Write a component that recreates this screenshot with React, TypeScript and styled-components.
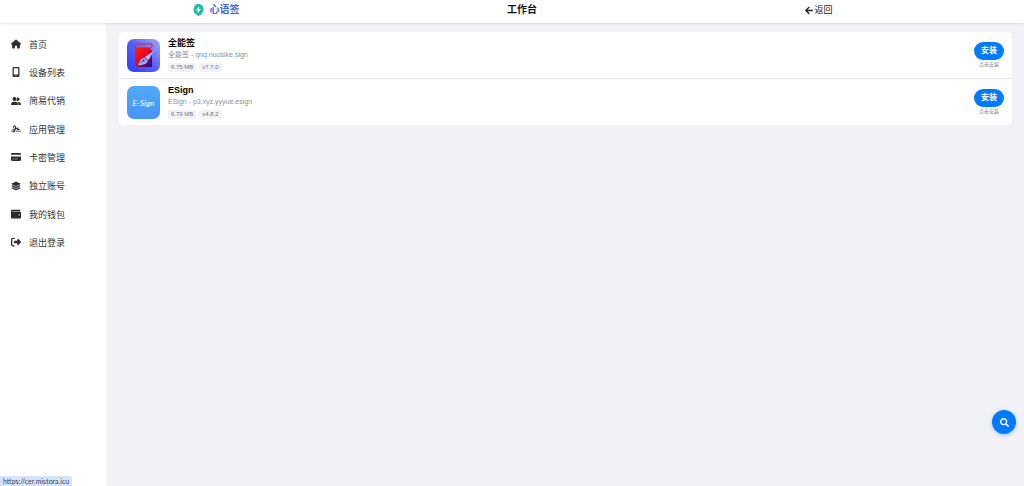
import React from 'react';
import styled, { createGlobalStyle } from 'styled-components';
import {
  FaHouse, FaMobileScreenButton, FaUserGroup, FaSignature, FaCreditCard,
  FaLayerGroup, FaWallet, FaRightFromBracket,
} from 'react-icons/fa6';
import { FaArrowLeft, FaSearch } from 'react-icons/fa';

const GlobalStyle = createGlobalStyle`
  * { box-sizing: border-box; }
  body {
    margin: 0;
    background: #f2f1f6;
    color: #333;
    font-family: "Liberation Sans", "Noto Sans CJK SC", sans-serif;
    font-size: 9px;
  }
  a { color: inherit; text-decoration: none; }
`;

const Page = styled.div`
  display: flex;
  flex-direction: column;
  min-height: 100vh;
`;

const Header = styled.header`
  display: flex;
  align-items: center;
  justify-content: space-between;
  height: 23px;
  padding: 0 18.7% 3px 18.8%;
  background: #fff;
  box-shadow: 0 1px 2px rgba(0, 0, 0, 0.1);
  z-index: 1;
`;

const Brand = styled.a`
  display: flex;
  align-items: center;
  gap: 6px;
  font-size: 10px;
  line-height: 12px;
  font-weight: 700;
  && { color: #4169e1; }
`;

const Title = styled.h1`
  margin: 0;
  font-size: 10px;
  line-height: 12px;
  color: #111;
`;

const Back = styled.a`
  display: flex;
  align-items: center;
  gap: 2px;
  font-size: 9px;
  line-height: 12px;
  && { color: #222; }
  svg { width: 8px; height: 9px; }
`;

const Body = styled.div`
  display: flex;
  flex: 1;
`;

const Sidebar = styled.nav`
  flex: none;
  width: 106px;
  padding-top: 7px;
  background: #fff;
`;

const Menu = styled.ul`
  margin: 0;
  padding: 0;
  list-style: none;
`;

const MenuItem = styled.li`
  &:nth-child(3n) a { height: 29px; }
`;

const MenuLink = styled.a`
  display: flex;
  align-items: center;
  gap: 8px;
  height: 28px;
  padding-left: 11px;
  font-size: 9px;
  svg { width: 10px; height: 10px; color: #2b2b2b; }
`;

const Main = styled.main`
  flex: 1;
  padding: 9px 12px 9px 13px;
`;

const AppList = styled.ul`
  margin: 0;
  padding: 0;
  list-style: none;
  background: #fff;
  border-radius: 5px;
`;

const AppRow = styled.li`
  display: flex;
  align-items: center;
  gap: 8px;
  padding: 5px 8px 6px;
  & + & { border-top: 1px solid #e8e8ec; }
`;

const AppIcon = styled.svg`
  flex: none;
  align-self: flex-end;
  width: 33px;
  height: 33px;
`;

const Info = styled.div`
  flex: 1;
  display: flex;
  flex-direction: column;
`;

const AppName = styled.h2`
  margin: 0;
  font-size: 9px;
  line-height: 12px;
  color: #000;
`;

const Detail = styled.p`
  margin: 0;
  font-size: 7px;
  line-height: 12px;
  color: #8e8e93;
`;

const Tags = styled.div`
  display: flex;
  gap: 3px;
  margin-top: 2px;
`;

const Tag = styled.span`
  padding: 0 3px;
  border-radius: 2px;
  background: #f2f2f7;
  font-size: 6px;
  line-height: 9px;
  color: #77777c;
`;

const Action = styled.div`
  display: flex;
  flex-direction: column;
  align-items: center;
`;

const InstallButton = styled.button`
  width: 30px;
  height: 18px;
  padding: 0;
  border: 0;
  border-radius: 9px;
  background: #007aff;
  color: #fff;
  font: inherit;
  font-size: 8px;
  font-weight: 700;
  line-height: 16px;
`;

const Hint = styled.small`
  font-size: 5px;
  line-height: 8px;
  color: #77777c;
`;

const SearchButton = styled.button`
  position: fixed;
  right: 8px;
  bottom: 52px;
  display: grid;
  place-items: center;
  width: 24px;
  height: 24px;
  padding: 0;
  border: 0;
  border-radius: 50%;
  background: #007aff;
  color: #fff;
  box-shadow: 0 1px 4px rgba(0, 122, 255, 0.35);
`;

const StatusBar = styled.div`
  position: fixed;
  left: 0;
  bottom: 0;
  padding: 1px 3px 0;
  border-top-right-radius: 3px;
  background: #d3e3fd;
  color: #474747;
  font-family: Lato, sans-serif;
  font-size: 7px;
  line-height: 9px;
`;

const BrandMark = () => (
  <svg width="11" height="12" viewBox="0 0 22 24" aria-hidden="true">
    <path d="M11 0C16 0 21 4 21 11C21 17 16 22 11 24C6 22 1 17 1 11C1 4 6 0 11 0Z" fill="#1abc9c" />
    <path d="M12 4L6 13H10L9 19L16 10H12Z" fill="#fff" />
  </svg>
);

const BookIcon = () => (
  <AppIcon viewBox="0 0 66 66" aria-hidden="true">
    <defs>
      <linearGradient id="bookBack" x1="0" y1="1" x2="1" y2="0">
        <stop offset="0" stopColor="#273dfa" />
        <stop offset=".5" stopColor="#5660f7" />
        <stop offset="1" stopColor="#a5abf2" />
      </linearGradient>
      <linearGradient id="bookCover" x1="0" y1="0" x2="1" y2="1">
        <stop offset="0" stopColor="#ff2500" />
        <stop offset=".45" stopColor="#ed061c" />
        <stop offset=".75" stopColor="#5b0870" />
        <stop offset="1" stopColor="#27118c" />
      </linearGradient>
      <linearGradient id="pen" x1="0" y1="1" x2="1" y2="0">
        <stop offset="0" stopColor="#e8f0ff" />
        <stop offset=".4" stopColor="#94b8f1" />
        <stop offset="1" stopColor="#8c92f0" />
      </linearGradient>
    </defs>
    <rect width="66" height="66" rx="14" fill="url(#bookBack)" />
    <path d="M16 17H45L50 24V56H20Q16 56 16 52Z" fill="url(#bookCover)" />
    <path d="M17 17V14Q17 10 21 10H50V15L46 19" fill="none" stroke="#e51a35" strokeWidth="2" />
    <path d="M56 21L43 42L36 36Z" fill="url(#pen)" />
    <path d="M35 37L42 43Q40 50 32 51L21 53L27 42Q29 38 35 37Z" fill="url(#pen)" />
    <path d="M21 53L32 44" stroke="#3342ad" strokeWidth="1.5" />
    <circle cx="33" cy="43" r="2" fill="#3342ad" />
  </AppIcon>
);

const ScriptLabel = styled.text`
  font-family: Lato, sans-serif;
  font-size: 17px;
  font-style: italic;
  font-weight: 400;
`;

const ESignIcon = () => (
  <AppIcon viewBox="0 0 66 66" aria-hidden="true">
    <defs>
      <linearGradient id="esignBack" x1="0" y1="0" x2="0" y2="1">
        <stop offset="0" stopColor="#52aaf8" />
        <stop offset="1" stopColor="#4794f7" />
      </linearGradient>
    </defs>
    <rect width="66" height="66" rx="14" fill="url(#esignBack)" />
    <ScriptLabel x="33" y="39" textAnchor="middle" fill="#fff">E-Sign</ScriptLabel>
  </AppIcon>
);

const menu = [
  { label: '首页', Icon: FaHouse },
  { label: '设备列表', Icon: FaMobileScreenButton },
  { label: '简易代销', Icon: FaUserGroup },
  { label: '应用管理', Icon: FaSignature },
  { label: '卡密管理', Icon: FaCreditCard },
  { label: '独立账号', Icon: FaLayerGroup },
  { label: '我的钱包', Icon: FaWallet },
  { label: '退出登录', Icon: FaRightFromBracket },
];

const apps = [
  { name: '全能签', detail: '全能签 - qnq.nuosike.sign', size: '6.75 MB', version: 'v7.7.0', Icon: BookIcon },
  { name: 'ESign', detail: 'ESign - p3.xyz.yyyue.esign', size: '6.79 MB', version: 'v4.8.2', Icon: ESignIcon },
];

export default function App() {
  return (
    <Page>
      <GlobalStyle />
      <Header>
        <Brand href="#"><BrandMark />心语签</Brand>
        <Title>工作台</Title>
        <Back href="#"><FaArrowLeft />返回</Back>
      </Header>
      <Body>
        <Sidebar>
          <Menu>
            {menu.map(({ label, Icon }) => (
              <MenuItem key={label}><MenuLink href="#"><Icon />{label}</MenuLink></MenuItem>
            ))}
          </Menu>
        </Sidebar>
        <Main>
          <AppList>
            {apps.map(({ name, detail, size, version, Icon }) => (
              <AppRow key={name}>
                <Icon />
                <Info>
                  <AppName>{name}</AppName>
                  <Detail>{detail}</Detail>
                  <Tags><Tag>{size}</Tag><Tag>{version}</Tag></Tags>
                </Info>
                <Action>
                  <InstallButton type="button">安装</InstallButton>
                  <Hint>点击安装</Hint>
                </Action>
              </AppRow>
            ))}
          </AppList>
        </Main>
      </Body>
      <SearchButton type="button" aria-label="搜索"><FaSearch size={9} /></SearchButton>
      <StatusBar>https://cer.mistora.icu</StatusBar>
    </Page>
  );
}
